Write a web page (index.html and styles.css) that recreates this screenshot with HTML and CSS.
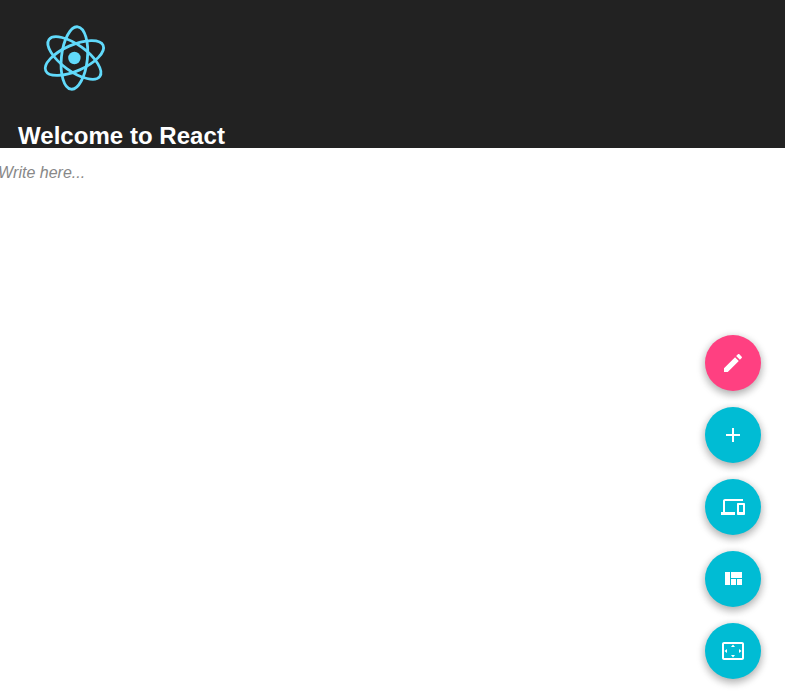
FILE: index.html
```html
<!DOCTYPE html>
<html lang="en">
<head>
<meta charset="utf-8">
<title>React App</title>
<link rel="stylesheet" href="styles.css">
</head>
<body>
<header class="app-header">
  <svg class="logo" viewBox="-40.4 -40 80 80" aria-hidden="true">
    <circle r="6.2" fill="#61dafb"/>
    <g class="orbits">
      <ellipse rx="31.4" ry="13" transform="rotate(-84)"/>
      <ellipse rx="31.4" ry="13" transform="rotate(-24)"/>
      <ellipse rx="31.4" ry="13" transform="rotate(36)"/>
    </g>
  </svg>
  <h2 class="title">Welcome to React</h2>
</header>
<main class="editor">Write here...</main>
<nav class="actions">
  <button class="fab fab-edit" aria-label="Edit"><svg viewBox="0 0 24 24"><path d="M3 17.25V21h3.75L17.81 9.94l-3.75-3.75L3 17.25zM20.71 7.04c.39-.39.39-1.02 0-1.41l-2.34-2.34c-.39-.39-1.02-.39-1.41 0l-1.83 1.83 3.75 3.75 1.83-1.83z"/></svg></button>
  <button class="fab" aria-label="Add"><svg viewBox="0 0 24 24"><path d="M19 13h-6v6h-2v-6H5v-2h6V5h2v6h6v2z"/></svg></button>
  <button class="fab" aria-label="Devices"><svg viewBox="0 0 24 24"><path d="M4 6h18V4H4c-1.1 0-2 .9-2 2v11H0v3h14v-3H4V6zm19 2h-6c-.55 0-1 .45-1 1v10c0 .55.45 1 1 1h6c.55 0 1-.45 1-1V9c0-.55-.45-1-1-1zm-1 9h-4v-7h4v7z"/></svg></button>
  <button class="fab" aria-label="Layout"><svg viewBox="0 0 24 24"><path d="M10 18h5v-6h-5v6zm-6 0h5V5H4v13zm12 0h5v-6h-5v6zM10 5v6h11V5H10z"/></svg></button>
  <button class="fab" aria-label="Fullscreen"><svg viewBox="0 0 24 24"><path d="M12.01 5.5L10 8h4l-1.99-2.5zM18 10v4l2.5-1.99L18 10zM6 10l-2.5 2.01L6 14v-4zm8 6h-4l2.01 2.5L14 16zm7-13H3c-1.1 0-2 .9-2 2v14c0 1.1.9 2 2 2h18c1.1 0 2-.9 2-2V5c0-1.1-.9-2-2-2zm0 16.01H3V4.99h18v14.02z"/></svg></button>
</nav>
</body>
</html>
```
FILE: styles.css
```css
* {
  box-sizing: border-box;
}

body {
  margin: 0;
  height: 100vh;
  overflow: hidden;
  background: #fff;
  font-family: "Liberation Sans", Arial, sans-serif;
}

.app-header {
  height: 148px;
  padding: 18px 18px 0;
  background: #222;
  color: #fff;
}

.logo {
  display: block;
  width: 80px;
  height: 80px;
  margin-left: 16px;
}

.orbits {
  fill: none;
  stroke: #61dafb;
  stroke-width: 2.8;
}

.title {
  margin: 24px 0 0;
  font-size: 24px;
  letter-spacing: 0.04px;
  line-height: 27px;
}

.editor {
  margin: 16px 0 0 -2px;
  color: #888;
  font-size: 16px;
  font-style: italic;
  line-height: 18px;
}

/* Floating buttons stay over the editor. */
.actions {
  position: fixed;
  right: 24px;
  bottom: 13px;
  display: flex;
  flex-direction: column;
  gap: 16px;
}

.fab {
  display: flex;
  align-items: center;
  justify-content: center;
  width: 56px;
  height: 56px;
  padding: 0;
  border: 0;
  border-radius: 50%;
  background: #00bcd4;
  box-shadow: 0 3px 10px rgba(0, 0, 0, 0.16), 0 3px 10px rgba(0, 0, 0, 0.23);
}

.fab-edit {
  background: #ff4081;
}

.fab svg {
  width: 24px;
  height: 24px;
  fill: #fff;
}
```
